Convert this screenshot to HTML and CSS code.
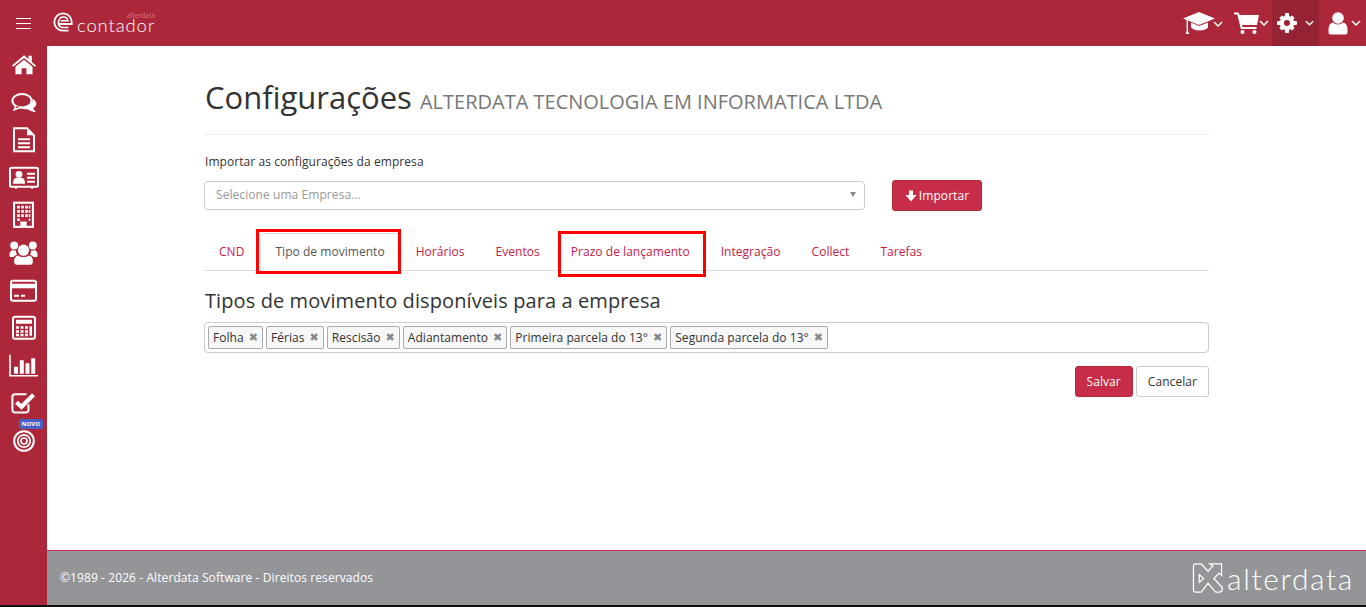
FILE: index.html
```html
<!DOCTYPE html>
<html lang="pt-BR">
<head>
  <meta charset="UTF-8">
  <title>Configurações</title>
  <link rel="stylesheet" href="styles.css">
</head>
<body>

  <header class="topbar">
    <button class="menu-btn" aria-label="Menu"><span></span><span></span><span></span></button>
    <div class="brand">
      <svg class="brand-mark" viewBox="0 0 20 20" width="20" height="20">
        <path d="M15.5 18.6 H10 C5 18.6 1.3 14.6 1.3 10 C1.3 5 5.4 1.3 10 1.3 C14.8 1.3 18.7 5 18.7 10 V12 H5.2" fill="none" stroke="#fff" stroke-width="1.8"/>
        <path d="M5.4 12 C4.9 7.6 7.4 5 10 5 C12.6 5 14.6 6.8 15 8.8 H7.5" fill="none" stroke="#fff" stroke-width="1.5"/>
        <path d="M5.4 12 C6 14.4 8 15.4 10 15.4 H15.5" fill="none" stroke="#fff" stroke-width="1.5"/>
      </svg>
      <div class="brand-name">
        <small>alterdata</small>
        <span>contador</span>
      </div>
    </div>

    <nav class="top-actions">
      <a class="top-item">
        <svg viewBox="0 0 32 22" width="32" height="22"><path d="M16 0 L32 6.5 L16 13 L5 8.6 V19 L6.2 22 H2.6 L3.6 19 V8 L0 6.5 Z" fill="#fff"/><path d="M8 10.6 L16 14 L25 10.4 V15.4 C22 19.4 11 19.4 8 15.4 Z" fill="#fff"/></svg>
        <svg class="chev" viewBox="0 0 10 6"><path d="M1 1 L5 5 L9 1" /></svg>
      </a>
      <a class="top-item">
        <svg viewBox="0 0 25 22" width="25" height="22"><path d="M0 0.5 H4.6 L5.6 3 H25 L23 13 H8 L8.6 15 H22.5 V17 H6.8 L3.4 2.5 H0 Z" fill="#fff"/><circle cx="8.5" cy="20" r="2" fill="#fff"/><circle cx="20.5" cy="20" r="2" fill="#fff"/></svg>
        <svg class="chev" viewBox="0 0 10 6"><path d="M1 1 L5 5 L9 1" /></svg>
      </a>
      <a class="top-item active">
        <svg viewBox="0 0 22 22" width="22" height="22"><circle cx="11" cy="11" r="5.6" fill="none" stroke="#fff" stroke-width="4.6"/><path d="M9 0 H13 L13.6 4 H8.4 Z M9 22 H13 L13.6 18 H8.4 Z M0 9 V13 L4 13.6 V8.4 Z M22 9 V13 L18 13.6 V8.4 Z M2.6 5.4 L5.4 2.6 L8.4 4.8 L4.8 8.4 Z M19.4 5.4 L16.6 2.6 L13.6 4.8 L17.2 8.4 Z M2.6 16.6 L5.4 19.4 L8.4 17.2 L4.8 13.6 Z M19.4 16.6 L16.6 19.4 L13.6 17.2 L17.2 13.6 Z" fill="#fff"/></svg>
        <svg class="chev" viewBox="0 0 10 6"><path d="M1 1 L5 5 L9 1" /></svg>
      </a>
      <a class="top-item">
        <svg viewBox="0 0 20 23" width="20" height="23"><circle cx="10" cy="6" r="5.8" fill="#fff"/><path d="M5 10.5 C7.5 13 12.5 13 15 10.5 C18 11 19.5 13.5 19.5 18 V20.5 C19.5 21.8 18.6 22.5 17.5 22.5 H2.5 C1.4 22.5 0.5 21.8 0.5 20.5 V18 C0.5 13.5 2 11 5 10.5 Z" fill="#fff"/></svg>
        <svg class="chev" viewBox="0 0 10 6"><path d="M1 1 L5 5 L9 1" /></svg>
      </a>
    </nav>
  </header>

  <div class="app">
    <aside class="sidebar">
      <svg viewBox="0 0 24 20" width="24" height="20"><path d="M12 0.5 L16.5 4.3 V1 H19.8 V7.1 L24 10.6 L22.8 12 L12 3.2 L1.2 12 L0 10.6 Z" fill="#fff"/><path d="M12 5 L20.5 12 V19.5 H14.4 V13.5 H9.6 V19.5 H3.5 V12 Z" fill="#fff"/></svg>
      <svg viewBox="0 0 26 20" width="26" height="20"><ellipse cx="11" cy="8" rx="9.6" ry="6.8" fill="none" stroke="#fff" stroke-width="2"/><path d="M5 13 L3.2 17 L10 14.5" fill="#ac2739" stroke="#fff" stroke-width="1.6"/><path d="M21.5 6 C24.5 7.5 25.6 9.6 25.2 11.6 C24.8 13.4 23.6 14.6 22 15.4 L25 19.5 C21 19 18 17.4 16.5 16.4 C13.6 16.6 10.5 16 8.8 14.9 C15 15.4 22.5 12.6 21.5 6 Z" fill="#fff"/></svg>
      <svg viewBox="0 0 22 25" width="22" height="26"><path d="M1 1 H14 L21 8 V24 H1 Z" fill="none" stroke="#fff" stroke-width="2"/><path d="M14 1 V8 H21 Z" fill="#fff"/><path d="M5 11 H17 V13 H5 Z M5 15 H17 V17 H5 Z M5 19 H17 V21 H5 Z" fill="#fff"/></svg>
      <svg viewBox="0 0 30 22" width="30" height="22"><rect x="1" y="1" width="28" height="19" rx="1.5" fill="none" stroke="#fff" stroke-width="2"/><circle cx="10" cy="7.5" r="3.4" fill="#fff"/><path d="M4 17 C4 12.5 6 11 8 11 H12 C14 11 16 12.5 16 17 Z" fill="#fff"/><path d="M18 6 H26 V8 H18 Z M18 10 H26 V12 H18 Z M18 14 H26 V16 H18 Z" fill="#fff"/><path d="M6 20 H8 V22 H6 Z M22 20 H24 V22 H22 Z" fill="#fff"/></svg>
      <svg viewBox="0 0 20 25" width="21" height="26"><rect x="1" y="1" width="18" height="23" fill="none" stroke="#fff" stroke-width="2"/><path d="M4 4 H6.5 V6.5 H4 Z M7.8 4 H10.3 V6.5 H7.8 Z M11.6 4 H14.1 V6.5 H11.6 Z M15 4 H16.5 V6.5 H15 Z M4 8 H6.5 V10.5 H4 Z M7.8 8 H10.3 V10.5 H7.8 Z M11.6 8 H14.1 V10.5 H11.6 Z M15 8 H16.5 V10.5 H15 Z M4 12 H6.5 V14.5 H4 Z M7.8 12 H10.3 V14.5 H7.8 Z M11.6 12 H14.1 V14.5 H11.6 Z M15 12 H16.5 V14.5 H15 Z M4 16 H6.5 V18.5 H4 Z M15 16 H16.5 V18.5 H15 Z M7 19 H13 V24 H7 Z" fill="#fff"/></svg>
      <svg viewBox="0 0 28 23" width="29" height="27"><circle cx="5" cy="4.5" r="3.8" fill="#fff"/><circle cx="23" cy="4.5" r="3.8" fill="#fff"/><path d="M0.5 15 C0.2 10 2 8.6 4.5 9 C5.5 9.6 6.4 9.6 7 9.4 C6.5 11 7 12.4 7.8 13.4 C6 14 5 14.6 4.4 15.6 C3 15.8 1.5 15.6 0.5 15 Z M27.5 15 C27.8 10 26 8.6 23.5 9 C22.5 9.6 21.6 9.6 21 9.4 C21.5 11 21 12.4 20.2 13.4 C22 14 23 14.6 23.6 15.6 C25 15.8 26.5 15.6 27.5 15 Z" fill="#fff"/><circle cx="14" cy="9" r="5.4" fill="#fff"/><path d="M9 14 C11 16 17 16 19 14 C21.6 14.4 23 16 23 19.5 V20.5 C23 22 22 23 20.5 23 H7.5 C6 23 5 22 5 20.5 V19.5 C5 16 6.4 14.4 9 14 Z" fill="#fff"/></svg>
      <svg viewBox="0 0 27 22" width="27" height="22"><rect x="1" y="1" width="25" height="20" rx="2" fill="none" stroke="#fff" stroke-width="2"/><path d="M1 4 H26 V8.5 H1 Z M4 15 H9 V17 H4 Z M11 15 H15 V17 H11 Z" fill="#fff"/></svg>
      <svg viewBox="0 0 24 24" width="24" height="26"><rect x="1" y="1" width="22" height="22" rx="2" fill="none" stroke="#fff" stroke-width="2"/><path d="M4 4 H20 V8 H4 Z M4 10.5 H7 V13 H4 Z M8.5 10.5 H11.5 V13 H8.5 Z M13 10.5 H16 V13 H13 Z M17.5 10.5 H20 V20 H17.5 Z M4 14.5 H7 V17 H4 Z M8.5 14.5 H11.5 V17 H8.5 Z M13 14.5 H16 V17 H13 Z M4 18 H7 V20.5 H4 Z M8.5 18 H11.5 V20.5 H8.5 Z M13 18 H16 V20.5 H13 Z" fill="#fff"/></svg>
      <svg viewBox="0 0 30 22" width="30" height="22"><path d="M1 0 V21 H29" fill="none" stroke="#fff" stroke-width="1.6"/><path d="M5 12 H9 V19 H5 Z M10.8 5.5 H14.8 V19 H10.8 Z M16.5 8.5 H20.5 V19 H16.5 Z M22.2 3.5 H26.2 V19 H22.2 Z" fill="#fff"/></svg>
      <svg viewBox="0 0 25 22" width="25" height="22"><path d="M17.5 12.5 V18 C17.5 19.6 16.5 20.6 15 20.6 H4 C2.4 20.6 1.4 19.6 1.4 18 V5 C1.4 3.4 2.4 2.4 4 2.4 H15.5" fill="none" stroke="#fff" stroke-width="2"/><path d="M5.5 10.5 L10.5 15 L22.5 3" fill="none" stroke="#fff" stroke-width="4.2"/></svg>
      <div class="target-item">
        <span class="badge-new">NOVO</span>
        <svg viewBox="0 0 22 22" width="22" height="22"><circle cx="11" cy="11" r="9.8" fill="none" stroke="#fff" stroke-width="2"/><circle cx="11" cy="11" r="6.2" fill="none" stroke="#fff" stroke-width="1.7"/><circle cx="11" cy="11" r="3" fill="none" stroke="#fff" stroke-width="1.7"/></svg>
      </div>
    </aside>

    <div class="main">
      <main class="content">
        <div class="page-header">
          <h1>Configurações <small>ALTERDATA TECNOLOGIA EM INFORMATICA LTDA</small></h1>
        </div>

        <label class="field-label">Importar as configurações da empresa</label>
        <div class="import-row">
          <div class="select-box">
            <span>Selecione uma Empresa...</span>
            <i class="caret"></i>
          </div>
          <button class="btn btn-primary btn-import">
            <svg viewBox="0 0 12 12" width="12" height="12"><path d="M4 0.5 H8 V5 H11.5 L6 11.5 L0.5 5 H4 Z" fill="#fff"/></svg>
            Importar
          </button>
        </div>

        <ul class="tabs">
          <li>CND</li>
          <li class="active marked-a">Tipo de movimento</li>
          <li>Horários</li>
          <li>Eventos</li>
          <li class="marked-b">Prazo de lançamento</li>
          <li>Integração</li>
          <li>Collect</li>
          <li>Tarefas</li>
        </ul>

        <h3>Tipos de movimento disponíveis para a empresa</h3>

        <div class="tag-input">
          <span class="tag">Folha<b>✖</b></span>
          <span class="tag">Férias<b>✖</b></span>
          <span class="tag">Rescisão<b>✖</b></span>
          <span class="tag">Adiantamento<b>✖</b></span>
          <span class="tag">Primeira parcela do 13°<b>✖</b></span>
          <span class="tag">Segunda parcela do 13°<b>✖</b></span>
        </div>

        <div class="actions">
          <button class="btn btn-primary">Salvar</button>
          <button class="btn btn-default">Cancelar</button>
        </div>
      </main>

      <footer class="footer">
        <span class="footer-text">©1989 - 2026 - Alterdata Software - Direitos reservados</span>
        <div class="footer-logo">
          <svg viewBox="0 0 32 32" width="32" height="31">
            <path d="M3 1 H9 L16 8.5 L21 3 L18 1 H30 V13 L27.5 10.5 L22 16 L30.5 25 C31.5 26.5 30.5 30 28 30 H24 L16 21 L9 30 H3 C1.5 30 1 29 1 28 V3 C1 2 1.5 1 3 1 Z" fill="none" stroke="#fff" stroke-width="1.3"/>
            <path d="M7 12 L11.5 16 L7 20 Z" fill="none" stroke="#fff" stroke-width="1.3"/>
          </svg>
          <span>alterdata</span>
        </div>
      </footer>
    </div>
  </div>

</body>
</html>
```

FILE: styles.css
```css
* {
  box-sizing: border-box;
}

html, body {
  height: 100%;
}

body {
  margin: 0;
  padding-bottom: 2px;
  display: flex;
  flex-direction: column;
  overflow: hidden;
  background: #111;
  color: #333;
  font-family: "Open Sans", sans-serif;
  font-size: 12px;
  letter-spacing: 0.07px;
}

/* Topo */
.topbar {
  flex: 0 0 46px;
  display: flex;
  align-items: center;
  background: #ac2739;
}

.menu-btn {
  width: 47px;
  height: 46px;
  padding: 0 16px;
  display: flex;
  flex-direction: column;
  justify-content: center;
  gap: 4px;
  background: none;
  border: 0;
}

.menu-btn span {
  display: block;
  height: 1px;
  background: #fff;
}

.brand {
  display: flex;
  align-items: center;
  margin-left: 6px;
  padding-bottom: 2px;
  color: #fff;
}

.brand-mark {
  margin-right: 4px;
}

.brand-name {
  font-family: Lato, sans-serif;
  font-weight: 300;
  font-size: 18.5px;
  line-height: 15px;
  letter-spacing: 0.85px;
}

.brand-name span {
  display: block;
}

.brand-name small {
  display: block;
  height: 6px;
  font-size: 7px;
  line-height: 6px;
  letter-spacing: 0.2px;
  text-align: right;
  color: #e3b9bf;
}

.top-actions {
  margin-left: auto;
  display: flex;
  height: 46px;
}

.top-item {
  display: flex;
  align-items: center;
  height: 46px;
  padding: 0 5px;
}

.top-item:nth-child(1) { padding-right: 8px; }
.top-item:nth-child(2) { padding: 0 3px; }
.top-item.active { width: 47px; background: #962333; }
.top-item:nth-child(4) { padding-left: 9px; }

.chev {
  width: 10px;
  height: 6px;
  margin-left: 3px;
  fill: none;
  stroke: #fff;
  stroke-width: 1.5;
}

.top-item:nth-child(1) .chev { margin-left: -2px; margin-top: 2px; }
.top-item:nth-child(2) .chev { margin-left: 0; }
.top-item.active .chev { margin-left: 8px; }

.app {
  flex: 1;
  display: flex;
  min-height: 0;
}

/* Menu lateral */
.sidebar {
  flex: 0 0 47px;
  display: flex;
  flex-direction: column;
  align-items: center;
  background: #ac2739;
}

.sidebar > svg,
.target-item {
  display: block;
  flex: 0 0 37.6px;
  height: 37.6px;
}

.target-item {
  position: relative;
  display: flex;
  align-items: center;
}

.badge-new {
  position: absolute;
  top: -3px;
  left: 6px;
  padding: 0 3px;
  border-radius: 2px;
  background: #4a5fc1;
  color: #fff;
  font-size: 6px;
  font-weight: 700;
  line-height: 10px;
}

.main {
  flex: 1;
  display: flex;
  flex-direction: column;
  min-width: 0;
  background: #fff;
}

.content {
  flex: 1;
  padding: 0 157px;
}

.page-header {
  height: 89px;
  padding-top: 29px;
  border-bottom: 1px solid #eee;
}

h1 {
  margin: 0 0 0 1px;
  font-size: 31px;
  font-weight: 400;
  line-height: 44px;
  letter-spacing: 0;
}

h1 small {
  font-size: 20px;
  color: #777;
}

.field-label {
  display: block;
  margin: 18px 0 0 1px;
  line-height: 17px;
}

.import-row {
  display: flex;
  align-items: flex-start;
  margin-top: 10px;
}

.select-box {
  width: 661px;
  height: 29px;
  margin-top: 1px;
  padding: 0 11px 2px;
  display: flex;
  align-items: center;
  justify-content: space-between;
  border: 1px solid #ccc;
  border-radius: 4px;
  color: #999;
}

.caret {
  width: 0;
  height: 0;
  margin-right: -3px;
  border-left: 3.5px solid transparent;
  border-right: 3.5px solid transparent;
  border-top: 5px solid #888;
}

.btn {
  height: 31px;
  padding: 0 11px;
  border-radius: 3px;
  font-family: inherit;
  font-size: 12px;
  letter-spacing: inherit;
}

.btn-primary {
  background: #c72c48;
  border: 1px solid #b02a3c;
  color: #fff;
}

.btn-default {
  background: #fff;
  border: 1px solid #ccc;
  color: #333;
}

.btn-import {
  width: 90px;
  margin-left: 27px;
  padding: 0;
  display: flex;
  align-items: center;
  justify-content: center;
  gap: 2px;
}

/* Abas */
.tabs {
  display: flex;
  height: 60px;
  margin: 0;
  padding: 0;
  list-style: none;
  border-bottom: 1px solid #ddd;
  align-items: flex-end;
  letter-spacing: 0.04px;
}

.tabs li {
  position: relative;
  height: 38px;
  margin-bottom: -1px;
  margin-right: 1px;
  padding: 9px 14px 0;
  border: 1px solid transparent;
  border-radius: 4px 4px 0 0;
  color: #c32148;
  line-height: 17px;
}

.tabs li.active {
  border-color: #ddd #ddd #fff;
  background: #fff;
  color: #555;
}

/* Marcações vermelhas sobre as abas */
.marked-a::after,
.marked-b::after {
  content: "";
  position: absolute;
  box-sizing: border-box;
  border: 3px solid #f00;
}

.marked-a::after {
  top: -5px;
  left: -5px;
  width: 145px;
  height: 45px;
}

.marked-b::after {
  top: -3px;
  left: 1px;
  width: 148px;
  height: 46px;
}

h3 {
  margin: 15px 0 0 1px;
  font-size: 20px;
  font-weight: 400;
  line-height: 30px;
  letter-spacing: 0.1px;
}

.tag-input {
  height: 31px;
  margin-top: 6px;
  padding: 3px;
  display: flex;
  gap: 3px;
  border: 1px solid #ccc;
  border-radius: 4px;
  letter-spacing: 0.05px;
}

.tag {
  height: 23px;
  padding: 0 4px;
  display: flex;
  align-items: center;
  border: 1px solid #aaa;
  border-radius: 2px;
  background: #f7f7f7;
  line-height: 20px;
}

.tag b {
  margin-left: 5px;
  font-size: 11px;
  font-weight: 400;
  color: #888;
  font-family: "DejaVu Sans", sans-serif;
}

.actions {
  margin-top: 13px;
  display: flex;
  justify-content: flex-end;
  gap: 3px;
}

/* Rodapé */
.footer {
  flex: 0 0 55px;
  padding: 0 12px 0 13px;
  display: flex;
  align-items: center;
  justify-content: space-between;
  border-top: 1px solid #c72c48;
  background: #939598;
  color: #fff;
}

.footer-text {
  margin-bottom: 2px;
  letter-spacing: 0.09px;
}

.footer-logo {
  display: flex;
  align-items: center;
  gap: 3px;
  font-family: Lato, sans-serif;
  font-weight: 300;
  font-size: 30px;
  line-height: 32px;
  letter-spacing: 1.6px;
}
```
